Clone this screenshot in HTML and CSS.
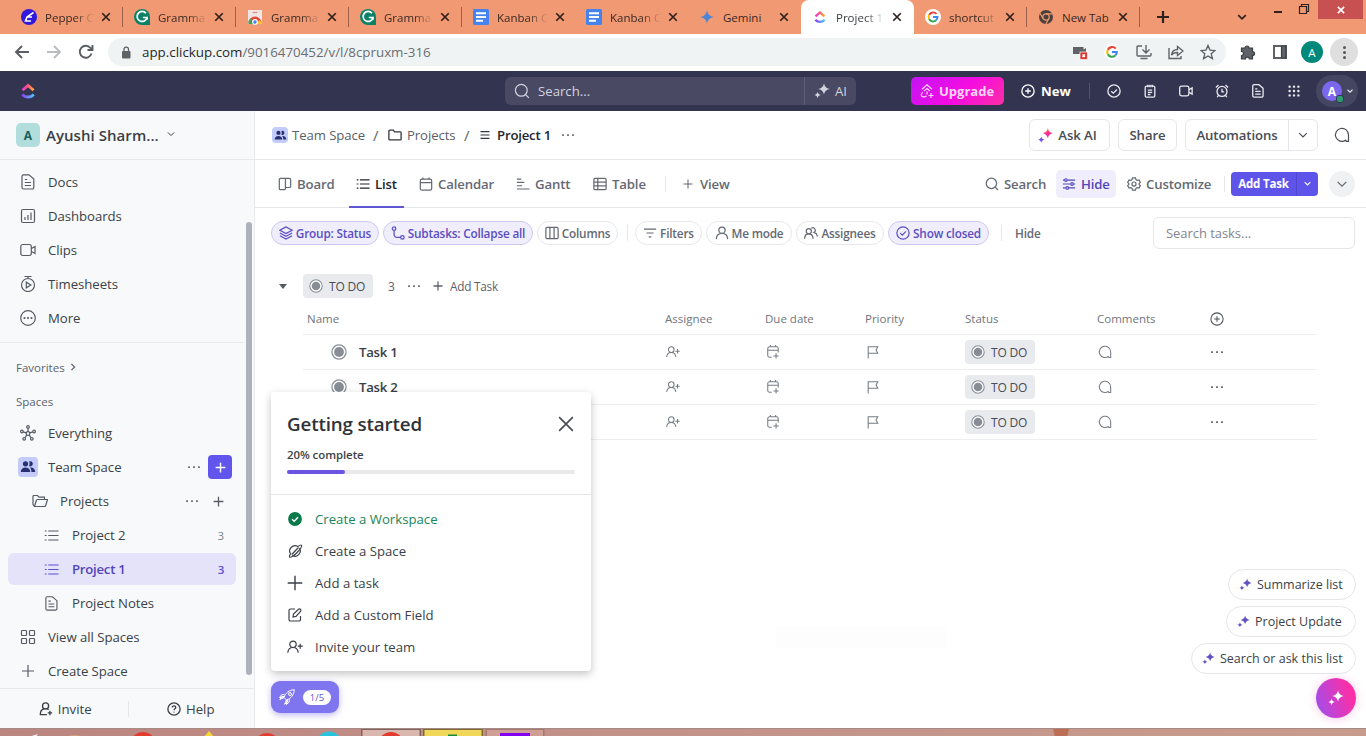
FILE: index.html
```html
<!DOCTYPE html>
<html lang="en">
<head>
  <meta charset="UTF-8">
  <meta name="viewport" content="width=device-width, initial-scale=1.0">
  <title>Project 1</title>
  <link rel="stylesheet" href="styles.css">
</head>
<body>
  <!-- icon sprite -->
  <svg class="sprite" width="0" height="0">
    <defs>
      <linearGradient id="cuTop" x1="0" x2="1" y1="0" y2="0"><stop offset="0" stop-color="#e83ad0"/><stop offset=".5" stop-color="#fb5779"/><stop offset="1" stop-color="#ffb02e"/></linearGradient>
      <linearGradient id="cuBottom" x1="0" x2="1" y1="0" y2="0"><stop offset="0" stop-color="#8a3ffc"/><stop offset="1" stop-color="#4cc9fa"/></linearGradient>
      <linearGradient id="aiBig" x1="0" x2="0" y1="0" y2="1"><stop offset="0" stop-color="#ff8a3c"/><stop offset=".5" stop-color="#fb2d8c"/><stop offset="1" stop-color="#e02ad0"/></linearGradient>
    </defs>
    <symbol id="x" viewBox="0 0 16 16"><path d="M3 3l10 10M13 3L3 13"/></symbol>
    <symbol id="plus" viewBox="0 0 16 16"><path d="M8 2v12M2 8h12"/></symbol>
    <symbol id="down" viewBox="0 0 16 16"><path d="M3 5.500l5 5 5-5"/></symbol>
    <symbol id="right" viewBox="0 0 16 16"><path d="M5.500 3l5 5-5 5"/></symbol>
    <symbol id="dots" viewBox="0 0 16 16"><g fill="currentColor" stroke="none"><rect x="1.200" y="7" width="2.200" height="2.200" rx=".8"/><rect x="6.900" y="7" width="2.200" height="2.200" rx=".8"/><rect x="12.600" y="7" width="2.200" height="2.200" rx=".8"/></g></symbol>
    <symbol id="search" viewBox="0 0 16 16"><circle cx="7.300" cy="7.300" r="5.900"/><path d="M11.600 11.600l3.200 3.200"/></symbol>
    <symbol id="sparkle" viewBox="0 0 16 16"><path fill="currentColor" stroke="none" d="M10 .5c.8 3.200 1.800 4.400 5.500 5.500-3.700 1.100-4.700 2.300-5.500 5.500C9.200 8.300 8.200 7.100 4.500 6 8.200 4.900 9.200 3.700 10 .5zM3.600 8.800c.5 1.900 1.100 2.600 3.200 3.200-2.100.6-2.700 1.300-3.200 3.200-.5-1.900-1.100-2.600-3.200-3.200 2.100-.6 2.700-1.300 3.200-3.200z"/></symbol>
    <symbol id="doc" viewBox="0 0 16 16"><path d="M3.500.8h5.500L13.800 5v8.500a1.500 1.500 0 0 1-1.500 1.500H3.500A1.500 1.500 0 0 1 2 13.500V2.300A1.500 1.500 0 0 1 3.500.8zM4.800 5.500h2.500M4.800 8.500h6.200M4.800 11.500h6.200"/></symbol>
    <symbol id="dash" viewBox="0 0 16 16"><rect x="1.500" y="1.500" width="13" height="13" rx="1.500"/><path d="M5 9v3M8 7v5M11 4.500V12"/></symbol>
    <symbol id="video" viewBox="0 0 16 16"><rect x=".8" y="2.500" width="10.500" height="11" rx="2"/><path d="M11.500 6.500l3.500-2v7l-3.500-2"/></symbol>
    <symbol id="timer" viewBox="0 0 16 16"><circle cx="8" cy="9" r="6.500"/><path d="M4.500 .4h7M8 .4v2M6.300 6.200v5.600l4.500-2.800z"/></symbol>
    <symbol id="more" viewBox="0 0 16 16"><circle cx="8" cy="8" r="7.300"/><g fill="currentColor" stroke="none"><circle cx="4.500" cy="8" r="1.100"/><circle cx="8" cy="8" r="1.100"/><circle cx="11.500" cy="8" r="1.100"/></g></symbol>
    <symbol id="hub" viewBox="0 0 16 16"><circle cx="8" cy="8.500" r="1.800"/><circle cx="8" cy="2" r="1.300"/><circle cx="1.900" cy="6.500" r="1.300"/><circle cx="14.100" cy="6.500" r="1.300"/><circle cx="4.200" cy="13.800" r="1.300"/><circle cx="11.800" cy="13.800" r="1.300"/><path d="M8 3.300v3.400M3.200 6.900l3 1M12.800 6.900l-3 1M5 12.600l1.900-2.700M11 12.600L9.100 9.900"/></symbol>
    <symbol id="team" viewBox="0 0 16 16"><g fill="currentColor" stroke="none"><circle cx="5.500" cy="4.800" r="2.600"/><path d="M.8 13c0-3 2-4.500 4.700-4.500s4.700 1.500 4.700 4.500z"/><path d="M9 2.500a2.600 2.600 0 1 1 0 4.600c.8-1.400.8-3.200 0-4.600zM10 8.500c3.300-.3 5.200 1.500 5.200 4.500h-3.800c0-2-.5-3.400-1.400-4.500z"/></g></symbol>
    <symbol id="folderOpen" viewBox="0 0 16 16"><path d="M2.500 13.500L1 11.500v-8A1 1 0 0 1 2 2.500h3.500L7 4.200h5.500v2.300M2.500 13.500l1.800-6a1.200 1.200 0 0 1 1.200-1h10l-1.800 6a1.300 1.300 0 0 1-1.200 1z"/></symbol>
    <symbol id="folder" viewBox="0 0 16 16"><path d="M1 12.500v-9A1 1 0 0 1 2 2.500h4l1.500 2H14a1 1 0 0 1 1 1v7a1 1 0 0 1-1 1H2a1 1 0 0 1-1-1z"/></symbol>
    <symbol id="list" viewBox="0 0 16 16"><path d="M4.500 3.200H15.500M4.500 8H15.500M4.500 12.800H15.500M.8 3.200h2M.8 8h2M.8 12.800h2"/></symbol>
    <symbol id="bars" viewBox="0 0 16 16"><path d="M2 3.500h12M2 8h12M2 12.500h12"/></symbol>
    <symbol id="grid4" viewBox="0 0 16 16"><rect x="1.500" y="1.500" width="5" height="5" rx=".8"/><rect x="9.500" y="1.500" width="5" height="5" rx=".8"/><rect x="1.500" y="9.500" width="5" height="5" rx=".8"/><rect x="9.500" y="9.500" width="5" height="5" rx=".8"/></symbol>
    <symbol id="personPlus" viewBox="0 0 16 16"><circle cx="6" cy="5.300" r="3.200"/><path d="M.8 13.800c.2-3.500 2-5.300 5.200-5.300s5 1.800 5.200 5.300M13.200 4.700v5M10.700 7.200h5"/></symbol>
    <symbol id="invite" viewBox="0 0 16 16"><circle cx="7.500" cy="4.500" r="3.500"/><path d="M9 14.500H1.500c0-3.500 1.500-6 4-6.500M9.500 8l1.500.8M12.500 10v5M10 12.500h5"/></symbol>
    <symbol id="help" viewBox="0 0 16 16"><circle cx="8" cy="8" r="7"/><path d="M6 6.300c0-2.600 4-2.400 4 0 0 1.500-2 1.400-2 3M8 11v1"/></symbol>
    <symbol id="board" viewBox="0 0 16 16"><path d="M3 1.500h10A1.500 1.500 0 0 1 14.500 3v7.500A1.500 1.500 0 0 1 13 12H8.500M3 1.500A1.500 1.500 0 0 0 1.500 3v10A1.500 1.500 0 0 0 3 14.500h4A1.500 1.500 0 0 0 8.500 13V1.500"/></symbol>
    <symbol id="cal" viewBox="0 0 16 16"><rect x="1.500" y="2.500" width="13" height="12.500" rx="2"/><path d="M1.500 6.500h13M4.500.5v2M11.500.5v2"/></symbol>
    <symbol id="calPlus" viewBox="0 0 16 16"><path d="M6.500 14H4A2 2 0 0 1 2 12V4a2 2 0 0 1 2-2h8a2 2 0 0 1 2 2v4.500M2 6h12M5 0v2M11 0v2M11.500 9.500V15.500M8.500 12.500h6"/></symbol>
    <symbol id="gantt" viewBox="0 0 16 16"><path d="M1 2.500h5M1 6.200h8.500M1 10h6M1 13.700h14.500"/></symbol>
    <symbol id="table" viewBox="0 0 16 16"><rect x="1" y="1.500" width="14" height="13" rx="1.500"/><path d="M1 5.800h14M1 10.200h14M5.500 1.500v13"/></symbol>
    <symbol id="layers" viewBox="0 0 16 16"><path d="M8 1L1 4.800l7 3.800 7-3.800zM1 8l7 3.800L15 8M1 11.200L8 15l7-3.800"/></symbol>
    <symbol id="subtask" viewBox="0 0 16 16"><circle cx="3.500" cy="3" r="2"/><circle cx="13" cy="13" r="2"/><path d="M3.500 5v4a4 4 0 0 0 4 4H11"/></symbol>
    <symbol id="columns" viewBox="0 0 16 16"><rect x="1" y="1.500" width="14" height="13" rx="1.500"/><path d="M5.600 1.500v13M10.400 1.500v13"/></symbol>
    <symbol id="filter" viewBox="0 0 16 16"><path d="M1 3.500h14M4 8h8M6.500 12.500h3"/></symbol>
    <symbol id="person" viewBox="0 0 16 16"><circle cx="8" cy="4.800" r="3.600"/><path d="M1.500 15c.2-4 2.500-6.500 6.500-6.500s6.300 2.500 6.500 6.500"/></symbol>
    <symbol id="people" viewBox="0 0 16 16"><circle cx="5.500" cy="6" r="2.900"/><path d="M.6 14.500c.2-3.500 2-5.500 4.900-5.500s4.700 2 4.900 5.500M8.500 2.500a2.800 2.800 0 1 1 3 4.800c2.200.6 3.600 2.200 3.900 4.700"/></symbol>
    <symbol id="check" viewBox="0 0 16 16"><circle cx="8" cy="8" r="7"/><path d="M4.800 8.200l2.400 2.300 4.200-4.300"/></symbol>
    <symbol id="sliders" viewBox="0 0 16 16"><path d="M1 3.500h1.500M6.500 3.500H15M1 8h8.500M13.500 8H15M1 12.500h3M8 12.500h7"/><circle cx="4.500" cy="3.500" r="1.500"/><circle cx="11.500" cy="8" r="1.500"/><circle cx="6" cy="12.500" r="1.500"/></symbol>
    <symbol id="gear" viewBox="0 0 16 16"><path d="M6.300 1h3.400l.5 2 1.500.9 2-.6 1.600 2.800L13.900 7.500v1l1.400 1.400-1.600 2.800-2-.6-1.500.9-.5 2H6.300l-.5-2-1.500-.9-2 .6L.7 9.900l1.400-1.400v-1L.7 6.100l1.600-2.800 2 .6L5.800 3z"/><circle cx="8" cy="8" r="2.300"/></symbol>
    <symbol id="bubble" viewBox="0 0 16 16"><path d="M14.500 8v6.300H12.300L11.700 13.200A6.500 6.500 0 1 1 14.500 8z"/></symbol>
    <symbol id="flag" viewBox="0 0 16 16"><path d="M2.500 15.500V2h11l-2 3.700 2 3.800h-11"/></symbol>
    <symbol id="circlePlus" viewBox="0 0 16 16"><circle cx="8" cy="8" r="7"/><path d="M8 4.800v6.400M4.800 8h6.400"/></symbol>
    <symbol id="todo" viewBox="0 0 16 16"><circle cx="8" cy="8" r="7.100" fill="#fff"/><circle cx="8" cy="8" r="4.900" fill="currentColor" stroke="none"/></symbol>
    <symbol id="clickup" viewBox="0 0 16 16"><path d="M2.500 7.200L8 2.400l5.500 4.800" fill="none" stroke="url(#cuTop)" stroke-width="2.800"/><path d="M2.300 11.300c3 3.600 8.400 3.600 11.400 0" fill="none" stroke="url(#cuBottom)" stroke-width="2.800"/></symbol>
    <symbol id="grammarly" viewBox="0 0 16 16"><path d="M8 0a8 8 0 0 1 8 8v8H8A8 8 0 1 1 8 0z" fill="#0b8268"/><path d="M12 4.300A5 5 0 1 0 13 8.500H8.800M13 8.500v2.300" fill="none" stroke="#fff" stroke-width="1.700"/></symbol>
    <symbol id="gdoc" viewBox="0 0 16 16"><rect width="16" height="16" rx="1.500" fill="#4584ee"/><path d="M3 4.200h10M3 8h10M3 11.800h7" stroke="#fff" stroke-width="1.900"/></symbol>
    <symbol id="google" viewBox="0 0 16 16"><g fill="none" stroke-width="2.400"><path d="M12.300 4.200A5.500 5.500 0 0 0 3.200 5.500" stroke="#ea4335"/><path d="M3.200 5.500a5.500 5.500 0 0 0 0 5" stroke="#fbbc05"/><path d="M3.200 10.500a5.500 5.500 0 0 0 8.500 1.600" stroke="#34a853"/><path d="M11.700 12.100A5.500 5.500 0 0 0 13.500 8H8" stroke="#4285f4"/></g></symbol>
  </svg>

  <div class="tabstrip">
    <div class="tab"><svg class="fav" viewBox="0 0 16 16"><circle cx="8" cy="8" r="8" fill="#3019dd"/><path d="M12.500 3.500L6 8l-1.500 4H10M6 8h5" fill="none" stroke="#fff" stroke-width="1.600"/></svg><span class="tab-title">Pepper C</span><svg class="tab-x"><use href="#x"/></svg></div>
    <div class="tab"><svg class="fav"><use href="#grammarly"/></svg><span class="tab-title">Gramma</span><svg class="tab-x"><use href="#x"/></svg></div>
    <div class="tab"><svg class="fav" viewBox="0 0 16 16"><path d="M1 1h14v14H1z" fill="#efe7e5"/><path d="M1.500 14a6.500 6.500 0 0 1 13 0z" fill="#e2483a"/><path d="M1.500 14a6.500 6.500 0 0 1 2-4.500L7 15H1.500z" fill="#3ea455"/><path d="M14.500 14a6.500 6.500 0 0 0-2-3L9 15h5.500z" fill="#fbc52d"/><circle cx="8" cy="13" r="2.300" fill="#4a80e8" stroke="#fff"/><path d="M5.500 3.500h5" stroke="#e88a7c"/></svg><span class="tab-title">Gramma</span><svg class="tab-x"><use href="#x"/></svg></div>
    <div class="tab"><svg class="fav"><use href="#grammarly"/></svg><span class="tab-title">Gramma</span><svg class="tab-x"><use href="#x"/></svg></div>
    <div class="tab"><svg class="fav"><use href="#gdoc"/></svg><span class="tab-title">Kanban C</span><svg class="tab-x"><use href="#x"/></svg></div>
    <div class="tab"><svg class="fav"><use href="#gdoc"/></svg><span class="tab-title">Kanban C</span><svg class="tab-x"><use href="#x"/></svg></div>
    <div class="tab last"><svg class="fav" viewBox="0 0 16 16"><path d="M8 1.500c1 4 2.500 5.500 6.500 6.500-4 1-5.500 2.500-6.500 6.500C7 10.500 5.500 9 1.500 8 5.500 7 7 5.500 8 1.500z" fill="#4a86d8"/></svg><span class="tab-title full">Gemini</span><svg class="tab-x"><use href="#x"/></svg></div>
    <div class="tab active"><svg class="fav" viewBox="0 0 16 16"><use href="#clickup" x="1.500" y="1.500" width="13" height="13"/></svg><span class="tab-title">Project 1</span><svg class="tab-x"><use href="#x"/></svg></div>
    <div class="tab"><svg class="fav" viewBox="0 0 16 16"><circle cx="8" cy="8" r="8" fill="#fff"/><use href="#google" x="1.500" y="1.500" width="13" height="13"/></svg><span class="tab-title">shortcut</span><svg class="tab-x"><use href="#x"/></svg></div>
    <div class="tab"><svg class="fav" viewBox="0 0 16 16"><circle cx="8" cy="8" r="7" fill="#4a403c"/><circle cx="8" cy="8" r="3.200" fill="#4a403c" stroke="#f09972" stroke-width="1.200"/><path d="M8 4.800h6.500M5.200 9.600L2 4.300M10.800 9.600l-3 5.400" stroke="#f09972"/></svg><span class="tab-title full">New Tab</span><svg class="tab-x"><use href="#x"/></svg></div>
    <svg class="new-tab"><use href="#plus"/></svg>
    <div class="window-buttons">
      <svg class="tab-search"><use href="#down"/></svg>
      <svg class="win-icon" viewBox="0 0 12 12"><path d="M2 9h8" stroke-width="2"/></svg>
      <svg class="win-icon" viewBox="0 0 12 12"><path d="M1.500 3.500h7v7h-7zM3.500 3.500v-2h7v7h-2"/></svg>
      <div class="win-close"><svg><use href="#x"/></svg></div>
    </div>
  </div>

  <div class="toolbar">
    <svg class="nav-icon" viewBox="0 0 16 16"><path d="M15 8H2M8 2L2 8l6 6"/></svg>
    <svg class="nav-icon dim" viewBox="0 0 16 16"><path d="M1 8h13M8 2l6 6-6 6"/></svg>
    <svg class="nav-icon" viewBox="0 0 16 16"><path d="M13.500 9.500A6 6 0 1 1 12.500 4L14 5.500M14.500 1v5h-5"/></svg>
    <div class="omnibox">
      <svg class="lock" viewBox="0 0 10 13"><rect x="1" y="5" width="8.500" height="7.500" rx="1" fill="#5f6368"/><path d="M3 5V3.300a2.200 2.200 0 0 1 4.500 0V5" fill="none" stroke="#5f6368" stroke-width="1.300"/></svg>
      <span class="url"><b>app.clickup.com</b>/9016470452/v/l/8cpruxm-316</span>
      <div class="omni-icons">
        <svg viewBox="0 0 16 16"><path d="M1 3h10.500v2.500L14 4v6H1z" fill="#5f6368" stroke="none"/><rect x="8" y="8" width="7.500" height="7.500" fill="#d93a30" stroke="#fff" stroke-width=".7"/><path d="M10.500 10.500l2.500 2.500M13 10.500L10.500 13" stroke="#fff"/></svg>
        <svg viewBox="0 0 16 16"><circle cx="8" cy="8" r="8" fill="#fff" stroke="none"/><use href="#google" x="1" y="1" width="14" height="14"/></svg>
        <svg viewBox="0 0 16 16"><path d="M6 2H2a1 1 0 0 0-1 1v8a1 1 0 0 0 1 1h12a1 1 0 0 0 1-1V9M4.500 14.500h7M10 1v8M6.500 5.500L10 9l3.500-3.500"/></svg>
        <svg viewBox="0 0 16 16"><path d="M1 4v10.500h12V12M3.500 11c.5-3.500 2.500-5.500 6-5.500V2.500L15 7l-5.500 4.500v-3c-2.500 0-4.500.5-6 2.500z"/></svg>
        <svg viewBox="0 0 16 16"><path d="M8 1.500l2 4.600 5 .4-3.800 3.300 1.200 4.900L8 12l-4.400 2.700 1.200-4.900L1 6.500l5-.4z"/></svg>
      </div>
    </div>
    <svg class="ext-icon" viewBox="0 0 16 16"><path d="M1.500 4H5a2 2 0 1 1 4 0h3.500v3.500a2 2 0 1 1 0 4V15H9.300a1.900 1.900 0 0 0-3.800 0h-4v-3.500a2 2 0 0 0 0-4z" fill="#5f6368"/></svg>
    <svg class="ext-icon" viewBox="0 0 16 16"><path d="M2 2h12v12H2z" fill="none" stroke="#5f6368" stroke-width="2"/><path d="M9.500 2H14v12H9.500z" fill="#5f6368"/></svg>
    <div class="chrome-avatar">A</div>
    <div class="menu-btn"><i></i><i></i><i></i></div>
  </div>

  <header class="app-header">
    <svg class="logo"><use href="#clickup"/></svg>
    <div class="global-search">
      <div class="gs-field"><svg><use href="#search"/></svg><span>Search...</span></div>
      <div class="gs-ai"><svg><use href="#sparkle"/></svg><span>AI</span></div>
    </div>
    <div class="header-right">
      <button class="upgrade"><svg viewBox="0 0 16 16"><path d="M3 6.200L8 1.800l5 4.400M5 8L8 5.500 11 8M4 9.500a2.200 2.200 0 0 0 0 4.300c1.500.3 2.500 0 3.500-.8M8 8.500v3M12 10v5M9.500 12.500h5"/></svg>Upgrade</button>
      <div class="new"><svg><use href="#circlePlus"/></svg>New</div>
      <span class="v-line"></span>
      <div class="quick">
        <svg><use href="#check"/></svg>
        <svg viewBox="0 0 16 16"><rect x="2.500" y="2.500" width="11" height="12.500" rx="1.500"/><path d="M5.500 .8v3M8 .8v3M10.500 .8v3M5.500 7h5M5.500 9.500h5M5.500 12h3"/></svg>
        <svg><use href="#video"/></svg>
        <svg viewBox="0 0 16 16"><circle cx="8" cy="8.500" r="5.700"/><path d="M8 5.500V9h2.500M1 4l3-2.800M15 4l-3-2.800M4 13l-1.500 2M12 13l1.500 2"/></svg>
        <svg><use href="#doc"/></svg>
        <svg viewBox="0 0 16 16"><path d="M3 3h.01M8 3h.01M13 3h.01M3 8h.01M8 8h.01M13 8h.01M3 13h.01M8 13h.01M13 13h.01" stroke-width="2.800" stroke-linecap="round"/></svg>
      </div>
      <div class="me"><span class="me-avatar">A<i></i></span><svg><use href="#down"/></svg></div>
    </div>
  </header>

  <div class="app">
    <aside class="sidebar">
      <div class="workspace"><span class="ws-badge">A</span><span class="ws-name">Ayushi Sharm...</span><svg><use href="#down"/></svg></div>
      <div class="side-scroll">
        <nav class="side-nav">
          <div class="side-item"><svg><use href="#doc"/></svg>Docs</div>
          <div class="side-item"><svg><use href="#dash"/></svg>Dashboards</div>
          <div class="side-item"><svg><use href="#video"/></svg>Clips</div>
          <div class="side-item"><svg><use href="#timer"/></svg>Timesheets</div>
          <div class="side-item"><svg><use href="#more"/></svg>More</div>
        </nav>
        <div class="side-label fav-label">Favorites <svg><use href="#right"/></svg></div>
        <div class="side-label">Spaces</div>
        <nav class="spaces">
          <div class="side-item"><svg><use href="#hub"/></svg>Everything</div>
          <div class="side-item"><span class="team-badge"><svg><use href="#team"/></svg></span>Team Space<svg class="dots push"><use href="#dots"/></svg><span class="add-btn"><svg><use href="#plus"/></svg></span></div>
          <div class="side-item lvl1"><svg><use href="#folderOpen"/></svg>Projects<svg class="dots push"><use href="#dots"/></svg><svg class="small-plus"><use href="#plus"/></svg></div>
          <div class="side-item lvl2"><svg><use href="#list"/></svg>Project 2<span class="count">3</span></div>
          <div class="side-item lvl2 selected"><svg><use href="#list"/></svg>Project 1<span class="count">3</span></div>
          <div class="side-item lvl2"><svg><use href="#doc"/></svg>Project Notes</div>
          <div class="side-item"><svg><use href="#grid4"/></svg>View all Spaces</div>
          <div class="side-item"><svg><use href="#plus"/></svg>Create Space</div>
        </nav>
        <div class="scrollbar"></div>
      </div>
      <div class="side-footer">
        <div><svg><use href="#invite"/></svg>Invite</div>
        <div><svg><use href="#help"/></svg>Help</div>
      </div>
    </aside>

    <main class="main">
      <div class="crumbs">
        <span class="team-badge sm"><svg><use href="#team"/></svg></span><span class="c-team">Team Space</span>
        <span class="slash">/</span>
        <svg class="dark"><use href="#folder"/></svg><span class="c-proj">Projects</span>
        <span class="slash">/</span>
        <svg class="dark bars"><use href="#bars"/></svg><span class="current">Project 1</span>
        <svg class="dots"><use href="#dots"/></svg>
        <div class="crumb-actions">
          <button class="btn ask"><svg viewBox="0 0 16 16"><path fill="url(#aiBig)" stroke="none" d="M10.500 0c.8 3.300 1.900 4.500 5.300 5.500-3.400 1-4.500 2.200-5.300 5.500-.8-3.300-1.900-4.500-5.300-5.500 3.400-1 4.500-2.200 5.300-5.500z"/><path fill="#7050e8" stroke="none" d="M3.500 9c.5 2.100 1.200 2.800 3.300 3.400-2.100.6-2.800 1.300-3.300 3.400-.5-2.100-1.200-2.800-3.300-3.400 2.100-.6 2.800-1.300 3.300-3.400z"/></svg>Ask AI</button>
          <button class="btn share">Share</button>
          <div class="btn split"><span>Automations</span><span class="split-arrow"><svg><use href="#down"/></svg></span></div>
          <svg class="chat"><use href="#bubble"/></svg>
        </div>
      </div>

      <div class="views">
        <div class="view v-board"><svg><use href="#board"/></svg>Board</div>
        <div class="view v-list on"><svg><use href="#list"/></svg>List</div>
        <div class="view v-cal"><svg><use href="#cal"/></svg>Calendar</div>
        <div class="view v-gantt"><svg><use href="#gantt"/></svg>Gantt</div>
        <div class="view v-table"><svg><use href="#table"/></svg>Table</div>
        <span class="v-line"></span>
        <div class="view"><svg class="p12"><use href="#plus"/></svg>View</div>
        <div class="view-actions">
          <div class="va-search"><svg><use href="#search"/></svg>Search</div>
          <div class="va-hide"><svg><use href="#sliders"/></svg>Hide</div>
          <div class="va-custom"><svg><use href="#gear"/></svg>Customize</div>
          <span class="v-line"></span>
          <div class="add-task"><span>Add Task</span><span class="at-arrow"><svg><use href="#down"/></svg></span></div>
          <div class="round"><svg><use href="#down"/></svg></div>
        </div>
      </div>

      <div class="filters">
        <span class="chip on w108"><svg><use href="#layers"/></svg>Group: Status</span>
        <span class="chip on w150"><svg><use href="#subtask"/></svg>Subtasks: Collapse all</span>
        <span class="chip w81"><svg><use href="#columns"/></svg>Columns</span>
        <span class="v-line f1"></span>
        <span class="chip w67"><svg><use href="#filter"/></svg>Filters</span>
        <span class="chip w86"><svg><use href="#person"/></svg>Me mode</span>
        <span class="chip w88"><svg><use href="#people"/></svg>Assignees</span>
        <span class="chip on w101"><svg><use href="#check"/></svg>Show closed</span>
        <span class="v-line f2"></span>
        <span class="hide-link">Hide</span>
        <div class="task-search">Search tasks...</div>
      </div>

      <div class="group">
        <span class="caret"></span>
        <span class="status"><svg><use href="#todo"/></svg>TO DO</span>
        <span class="g-count">3</span>
        <svg class="dots"><use href="#dots"/></svg>
        <svg class="g-plus"><use href="#plus"/></svg>
        <span class="g-add">Add Task</span>
      </div>

      <div class="table">
        <div class="row head"><span>Name</span><span>Assignee</span><span>Due date</span><span>Priority</span><span>Status</span><span>Comments</span><svg><use href="#circlePlus"/></svg></div>
        <div class="row"><span class="name"><svg><use href="#todo"/></svg>Task 1</span><svg><use href="#personPlus"/></svg><svg><use href="#calPlus"/></svg><svg><use href="#flag"/></svg><span class="status"><svg><use href="#todo"/></svg>TO DO</span><svg><use href="#bubble"/></svg><svg class="dots"><use href="#dots"/></svg></div>
        <div class="row"><span class="name"><svg><use href="#todo"/></svg>Task 2</span><svg><use href="#personPlus"/></svg><svg><use href="#calPlus"/></svg><svg><use href="#flag"/></svg><span class="status"><svg><use href="#todo"/></svg>TO DO</span><svg><use href="#bubble"/></svg><svg class="dots"><use href="#dots"/></svg></div>
        <div class="row"><span></span><svg><use href="#personPlus"/></svg><svg><use href="#calPlus"/></svg><svg><use href="#flag"/></svg><span class="status"><svg><use href="#todo"/></svg>TO DO</span><svg><use href="#bubble"/></svg><svg class="dots"><use href="#dots"/></svg></div>
      </div>

      <!-- floating widgets -->
      <section class="started">
        <div class="st-top">
          <div class="st-title"><h2>Getting started</h2><svg><use href="#x"/></svg></div>
          <p>20% complete</p>
          <div class="bar"><div class="bar-fill" style="width: 20%"></div></div>
        </div>
        <ul>
          <li class="done"><svg viewBox="0 0 16 16"><circle cx="8" cy="8" r="6.900" fill="#0b7a4b" stroke="none"/><path d="M5 8.200l2.200 2 3.800-4" stroke="#fff" stroke-width="1.500"/></svg>Create a Workspace</li>
          <li><svg viewBox="0 0 16 16"><path d="M3.600 10.900A5.300 5.300 0 0 1 11 3.600M12.400 5.100A5.300 5.300 0 0 1 5.100 12.400M11 3.600c1.500-1.300 3-1.800 3.500-1.300 1 1-1.300 4-4.400 7.200s-6.500 5.500-7.500 4.500c-.5-.5 0-1.700 1-3.100M4.700 11.500l6.800-7"/></svg>Create a Space</li>
          <li><svg viewBox="0 0 16 16"><path d="M8 .7v14.600M.7 8h14.600" stroke-width="1.400"/></svg>Add a task</li>
          <li><svg viewBox="0 0 16 16"><path d="M8 2H3.500A1.500 1.500 0 0 0 2 3.500v9A1.500 1.500 0 0 0 3.500 14h8.500A1.500 1.500 0 0 0 13.500 12.500V9M6 10l.5-3L11.500 2.200c1.500-1 3 .5 2.200 2L9 9.400z"/></svg>Add a Custom Field</li>
          <li><svg><use href="#personPlus"/></svg>Invite your team</li>
        </ul>
      </section>
      <div class="rocket"><svg viewBox="0 0 16 16"><path d="M5 8.500C6.500 4 10 1 15.300.7 15 6 12 9.500 7.500 11zM5.500 7.500H2.700L.8 10.500 5 8.500M8.500 10.500v2.800l-3 1.900 2-4.200M5.500 5.500L2.500 5.800.5 8.500l4 .3M10.500 10.200l-.5 3-2.500 2.300-.3-4"/><circle cx="11" cy="5" r="1.500"/></svg><span>1/5</span></div>
      <div class="ghost"></div>
      <div class="ai-chips">
        <span class="ai-chip a1"><svg><use href="#sparkle"/></svg>Summarize list</span>
        <span class="ai-chip a2"><svg><use href="#sparkle"/></svg>Project Update</span>
        <span class="ai-chip a3"><svg><use href="#sparkle"/></svg>Search or ask this list</span>
      </div>
      <div class="ai-fab"><svg><use href="#sparkle"/></svg></div>
    </main>
  </div>

  <div class="taskbar">
    <svg viewBox="0 0 1366 8">
      <path d="M361 0h60v8h-60z" fill="#80635e"/><path d="M362.500 1h57v7h-57z" fill="#dbb8af"/>
      <path d="M423 0h60v8h-60z" fill="#7d6b35"/><path d="M424.500 1h57v7h-57z" fill="#f0d75a"/>
      <path d="M485.500 0h59v8h-59z" fill="#a37a73"/><path d="M487 1h56v7h-56z" fill="#cf9f95"/>
      <path d="M28 8l10-3-2 3z" fill="#eee"/><path d="M65 8q10-4 19 0z" fill="#d99b74"/>
      <circle cx="143" cy="16" r="13" fill="#e23c30"/><circle cx="267" cy="17" r="13" fill="#e23c30"/><circle cx="391" cy="16" r="13" fill="#e23c30"/>
      <path d="M209 2l5 6h-10z" fill="#f7d831"/><circle cx="329" cy="15.500" r="13" fill="#28c4dd"/>
      <path d="M448 5.500h9v2.500h-9z" fill="#188a35"/><path d="M500 4h30v4h-30z" fill="#8300f0"/>
      <path d="M1053 0h16l-2 8h-12z" fill="#b9593b" opacity=".65"/>
    </svg>
  </div>
</body>
</html>
```
FILE: styles.css
```css
* {
  box-sizing: border-box;
}

body {
  margin: 0;
  width: 1366px;
  height: 736px;
  overflow: hidden;
  display: flex;
  flex-direction: column;
  font-family: "Open Sans", "Noto Sans", sans-serif;
  font-size: 13.2px;
  color: #3b3f46;
  background: #fff;
}

svg {
  width: 16px;
  height: 16px;
  flex: none;
  display: block;
  fill: none;
  stroke: currentColor;
  stroke-width: 1.2;
}

.sprite {
  position: absolute;
  width: 0;
  height: 0;
}

button {
  font: inherit;
  margin: 0;
}

/* browser tabs */
.tabstrip {
  height: 34px;
  flex: none;
  background: #f09972;
  display: flex;
  align-items: center;
  padding-left: 10px;
  color: #3a2823;
}

.tab {
  width: 113px;
  height: 34px;
  flex: none;
  display: flex;
  align-items: center;
  padding-left: 11px;
  font-size: 11.5px;
}

.tab::after {
  content: "";
  margin-left: 10px;
  width: 1px;
  height: 20px;
  background: #9b614a;
}

.tab.last::after,
.tab.active::after {
  visibility: hidden;
}

.tab.active {
  background: #fff;
  border-radius: 8px 8px 0 0;
  color: #3c4043;
}

.fav {
  stroke: none;
}

.tab-title {
  width: 51px;
  margin-left: 8px;
  white-space: nowrap;
  -webkit-mask-image: linear-gradient(90deg, #000 60%, transparent);
  mask-image: linear-gradient(90deg, #000 60%, transparent);
}

.tab-title.full {
  -webkit-mask-image: none;
  mask-image: none;
}

.tab-x {
  width: 12px;
  height: 12px;
  margin-left: 6px;
  stroke-width: 2.3;
  color: #30211c;
}

.new-tab {
  margin-left: 15px;
  stroke-width: 2.2;
  color: #30211c;
}

.window-buttons {
  margin-left: auto;
  height: 34px;
  display: flex;
  align-items: flex-start;
  color: #30211c;
}

.tab-search {
  width: 12px;
  height: 12px;
  margin: 11px 24px 0 0;
  stroke-width: 2.3;
}

.win-icon {
  width: 12px;
  height: 12px;
  margin: 3px 14px 0 0;
}

.win-close {
  width: 45px;
  height: 19px;
  margin-right: 3px;
  margin-left: -6px;
  background: #c75050;
  color: #fff;
  display: flex;
  align-items: center;
  justify-content: center;
}

.win-close svg {
  width: 10px;
  height: 10px;
  stroke-width: 2.6;
}

/* browser toolbar */
.toolbar {
  height: 37px;
  flex: none;
  display: flex;
  align-items: center;
  padding: 0 8px 1px 14px;
}

.nav-icon {
  margin-right: 16px;
  stroke-width: 1.9;
  color: #5a5d61;
}

.nav-icon.dim {
  color: #b9bbbe;
}

.omnibox {
  width: 1118px;
  height: 28px;
  margin-left: -2px;
  border-radius: 14px;
  background: #f0f3f4;
  display: flex;
  align-items: center;
  padding: 0 10px 0 13px;
}

.lock {
  width: 10px;
  height: 13px;
  margin-right: 11px;
  stroke: none;
}

.url {
  font-size: 13.35px;
  color: #6a6e73;
}

.url b {
  font-weight: 400;
  color: #26282b;
}

.omni-icons {
  margin-left: auto;
  display: flex;
  gap: 16px;
  color: #5f6368;
}

.omni-icons svg {
  stroke-width: 1.4;
}

.ext-icon {
  margin-left: 14px;
  margin-right: 2px;
}

.ext-icon + .ext-icon {
  margin-right: 0;
}

.chrome-avatar {
  width: 22px;
  height: 22px;
  margin-left: 13px;
  border-radius: 50%;
  background: #00897b;
  color: #fff;
  font-size: 11.5px;
  display: flex;
  align-items: center;
  justify-content: center;
}

.menu-btn {
  width: 28px;
  height: 28px;
  margin-left: 7px;
  border-radius: 50%;
  background: #dfdfdf;
  display: flex;
  flex-direction: column;
  align-items: center;
  justify-content: center;
  gap: 2px;
  flex: none;
}

.menu-btn i {
  width: 3px;
  height: 3px;
  border-radius: 50%;
  background: #55585c;
}

/* app header */
.app-header {
  height: 40px;
  flex: none;
  background: #33344f;
  color: #e9e9f1;
  display: flex;
  align-items: center;
  padding-left: 20px;
}

.logo {
  stroke: none;
}

.global-search {
  width: 351px;
  height: 28px;
  margin-left: 469px;
  border-radius: 6px;
  background: #494964;
  display: flex;
  color: #d3d4df;
}

.gs-field {
  width: 300px;
  display: flex;
  align-items: center;
  gap: 8px;
  padding-left: 9px;
  border-right: 1px solid #5c5d78;
}

.gs-ai {
  display: flex;
  align-items: center;
  gap: 5px;
  padding-left: 9px;
}

.header-right {
  margin-left: auto;
  display: flex;
  align-items: center;
}

.upgrade {
  width: 93px;
  height: 28px;
  border: 0;
  border-radius: 5px;
  background: linear-gradient(135deg, #c314f5, #f50ce0 55%, #fb2fa5);
  color: #ffd5fa;
  font-weight: 700;
  font-size: 13px;
  display: flex;
  align-items: center;
  gap: 4px;
  padding: 0 8px;
}

.new {
  display: flex;
  align-items: center;
  gap: 6px;
  margin-left: 17px;
  width: 52px;
  font-weight: 700;
  color: #fff;
}

.new svg {
  width: 14px;
  height: 14px;
  stroke-width: 1.5;
}

.v-line {
  width: 1px;
  height: 16px;
  background: #e4e6ea;
}

.header-right .v-line {
  margin-left: 16px;
  background: #51526c;
}

.quick {
  display: flex;
  gap: 22px;
  margin-left: 17px;
}

.quick svg {
  width: 14px;
  height: 14px;
  stroke-width: 1.5;
}

.me {
  width: 42px;
  height: 32px;
  margin: 0 8px 0 15px;
  border-radius: 16px;
  background: #454662;
  display: flex;
  align-items: center;
  padding-left: 6px;
  gap: 4px;
}

.me svg {
  width: 8px;
  height: 8px;
  stroke-width: 2.2;
}

.me-avatar {
  width: 20px;
  height: 20px;
  border-radius: 50%;
  background: #7b68ee;
  color: #fff;
  font-size: 12px;
  font-weight: 700;
  display: flex;
  align-items: center;
  justify-content: center;
  position: relative;
}

.me-avatar i {
  position: absolute;
  right: -2px;
  bottom: -2px;
  width: 8px;
  height: 8px;
  border-radius: 3px;
  border: 1px solid #2c3a4c;
  background: #2f9a72;
}

/* sidebar */
.app {
  height: 617px;
  flex: none;
  display: flex;
}

.sidebar {
  width: 255px;
  flex: none;
  background: #f7f9fb;
  border-right: 1px solid #e9ebee;
  display: flex;
  flex-direction: column;
}

.workspace {
  height: 49px;
  flex: none;
  border-bottom: 1px solid #e6e8eb;
  display: flex;
  align-items: center;
  padding-left: 16px;
}

.ws-badge {
  width: 24px;
  height: 24px;
  border-radius: 5px;
  background: #b1dedd;
  color: #17605c;
  font-size: 12px;
  font-weight: 700;
  display: flex;
  align-items: center;
  justify-content: center;
}

.ws-name {
  margin-left: 6px;
  width: 115px;
  font-size: 15px;
  font-weight: 600;
  letter-spacing: 0.05px;
  white-space: nowrap;
}

.workspace svg {
  width: 10px;
  height: 10px;
  margin-left: 5px;
  margin-top: -2px;
  stroke-width: 1.6;
}

.side-scroll {
  height: 528px;
  position: relative;
}

.side-nav {
  width: 244px;
  padding: 5px 0 7px;
  border-bottom: 1px solid #e8eaee;
}

.side-item {
  height: 34px;
  display: flex;
  align-items: center;
  padding: 0 15px 0 20px;
  gap: 12px;
  color: #3b3f46;
  letter-spacing: -0.05px;
}

.side-item > svg {
  color: #565b64;
}

.side-label {
  height: 34px;
  display: flex;
  align-items: center;
  padding-left: 16px;
  gap: 3px;
  font-size: 11.5px;
  color: #5d626b;
}

.side-label svg {
  width: 10px;
  height: 10px;
  stroke-width: 2;
}

.fav-label {
  margin-top: 7px;
}

.spaces {
  width: 247px;
  margin-top: -2px;
}

.team-badge {
  width: 20px;
  height: 20px;
  flex: none;
  margin: 0 -2px;
  border-radius: 4px;
  background: #c3cbfb;
  color: #28306f;
  display: flex;
  align-items: center;
  justify-content: center;
}

.team-badge.sm {
  width: 16px;
  height: 16px;
  margin: 0;
}

.team-badge.sm svg {
  width: 13px;
  height: 13px;
}

.dots {
  width: 14px;
  height: 14px;
  color: #555a63;
}

.side-item .push {
  margin-left: auto;
  margin-right: -5px;
}

.add-btn {
  width: 24px;
  height: 24px;
  border-radius: 4px;
  background: #6155ec;
  color: #fff;
  display: flex;
  align-items: center;
  justify-content: center;
}

.add-btn svg {
  width: 13px;
  height: 13px;
  stroke-width: 1.8;
}

.lvl1 {
  padding-left: 32px;
}

.lvl1 .small-plus {
  width: 13px;
  height: 13px;
  margin: 0 7px 0 5px;
  stroke-width: 1.6;
}

.lvl1 .push {
  margin-right: -4px;
}

.lvl2 {
  padding-left: 44px;
}

.lvl2 > svg {
  width: 15px;
  height: 15px;
  margin-right: 1px;
}

.count {
  margin-left: auto;
  margin-right: 8px;
  font-size: 11.5px;
  color: #7c828b;
}

.side-item.selected {
  height: 32px;
  margin: 1px 11px 1px 8px;
  padding: 0 4px 0 36px;
  border-radius: 6px;
  background: #e5e3fa;
  color: #5346b8;
  font-weight: 600;
  letter-spacing: -0.25px;
}

.selected > svg,
.selected .count {
  color: #5b4fd0;
}

.scrollbar {
  position: absolute;
  left: 246px;
  top: 62px;
  width: 6px;
  height: 453px;
  border-radius: 3px;
  background: #aeb2bc;
}

.side-footer {
  height: 40px;
  border-top: 1px solid #e6e8eb;
  display: flex;
  align-items: center;
}

.side-footer div {
  flex: 1;
  height: 16px;
  display: flex;
  align-items: center;
  justify-content: center;
  gap: 5px;
}

.side-footer div:first-child {
  padding-left: 3px;
}

.side-footer div:last-child {
  border-left: 1px solid #e4e6ea;
  padding-right: 1px;
}

.side-footer svg {
  width: 14px;
  height: 14px;
  stroke-width: 1.5;
}

/* main area */
.main {
  width: 1111px;
  position: relative;
}

.crumbs {
  height: 49px;
  border-bottom: 1px solid #e6e8eb;
  display: flex;
  align-items: center;
  padding: 0 16px 0 17px;
  color: #5a5f68;
}

.c-team {
  width: 73px;
  margin-left: 4px;
  letter-spacing: -0.1px;
  white-space: nowrap;
}

.slash {
  width: 6px;
  margin: 0 9px 0 8px;
  font-size: 15px;
}

.crumbs .dark {
  width: 14px;
  height: 14px;
  margin-right: 5px;
  color: #33363c;
  stroke-width: 1.5;
}

.crumbs .bars {
  width: 12px;
  margin-left: 0;
  margin-right: 6px;
}

.c-proj {
  width: 49px;
  letter-spacing: -0.1px;
}

.current {
  width: 54px;
  margin-right: 10px;
  font-weight: 600;
  letter-spacing: -0.2px;
  color: #23262c;
  white-space: nowrap;
}

.crumb-actions {
  margin-left: auto;
  display: flex;
  align-items: center;
  gap: 8px;
}

.btn {
  height: 32px;
  border: 1px solid #e4e6ea;
  border-radius: 6px;
  background: #fff;
  color: #484c54;
  font-size: 13.2px;
  font-weight: 600;
  letter-spacing: -0.1px;
  display: flex;
  align-items: center;
  justify-content: center;
  gap: 5px;
  padding: 0;
  white-space: nowrap;
}

.ask {
  width: 81px;
  padding-right: 4px;
}

.ask svg {
  width: 15px;
  height: 15px;
}

.share {
  width: 59px;
}

.split {
  width: 133px;
  gap: 0;
}

.split > span:first-child {
  width: 102px;
  text-align: center;
}

.split-arrow {
  flex: 1;
  height: 30px;
  border-left: 1px solid #e4e6ea;
  display: flex;
  align-items: center;
  justify-content: center;
}

.split-arrow svg,
.round svg {
  width: 12px;
  height: 12px;
  stroke-width: 1.6;
}

.chat {
  margin-left: 8px;
  color: #484c54;
}

.views {
  height: 48px;
  border-bottom: 1px solid #e6e8eb;
  display: flex;
  align-items: center;
  padding: 0 11px 0 23px;
  color: #646973;
  font-weight: 600;
  letter-spacing: -0.15px;
}

.view {
  height: 48px;
  display: flex;
  align-items: center;
  gap: 5px;
  white-space: nowrap;
}

.view svg,
.view-actions svg {
  width: 14px;
  height: 14px;
  stroke-width: 1.4;
}

.view .p12 {
  width: 12px;
  height: 12px;
  margin-right: 1px;
}

.v-board {
  width: 71px;
}

.v-list {
  width: 55px;
  padding-left: 7px;
  border-bottom: 2px solid #6155d2;
  padding-top: 2px;
  margin-right: 15px;
}

.view.on {
  color: #23262c;
}

.v-cal {
  width: 97px;
}

.v-gantt {
  width: 77px;
}

.v-table {
  width: 72px;
}

.views > .v-line {
  margin-right: 16px;
}

.view-actions {
  margin-left: auto;
  display: flex;
  align-items: center;
  white-space: nowrap;
}

.view-actions > div {
  display: flex;
  align-items: center;
  gap: 5px;
}

.va-search {
  width: 71px;
}

.va-hide {
  width: 60px;
  height: 28px;
  padding-left: 6px;
  border-radius: 5px;
  background: #f0eefd;
  color: #5346b8;
}

.va-custom {
  margin-left: 11px;
  width: 97px;
}

.view-actions .add-task {
  width: 87px;
  height: 24px;
  margin: 0 11px 0 6px;
  border-radius: 4px;
  background: #5f54ea;
  color: #fff;
  font-size: 11.5px;
  font-weight: 700;
  gap: 0;
}

.add-task > span:first-child {
  width: 65px;
  text-align: center;
}

.at-arrow {
  flex: 1;
  height: 24px;
  border-left: 1px solid #5146cf;
  display: flex;
  align-items: center;
  justify-content: center;
}

.view-actions .at-arrow svg {
  width: 9px;
  height: 9px;
  stroke-width: 2;
}

.view-actions .round {
  width: 26px;
  height: 26px;
  border-radius: 50%;
  background: #eff1f2;
  justify-content: center;
}

/* filter chips */
.filters {
  height: 49px;
  display: flex;
  align-items: center;
  padding: 0 11px 0 16px;
  font-size: 11.8px;
  font-weight: 600;
  letter-spacing: -0.2px;
  color: #646973;
}

.chip {
  height: 24px;
  border: 1px solid #e6e8eb;
  border-radius: 12px;
  display: flex;
  align-items: center;
  justify-content: center;
  gap: 3px;
  margin-right: 4px;
  white-space: nowrap;
}

.chip svg {
  width: 14px;
  height: 14px;
  stroke-width: 1.4;
}

.chip.on {
  border-color: #cdc8f0;
  background: #f0eefd;
  color: #5a4ec0;
}

.w108 { width: 108px; }
.w150 { width: 150px; }
.w81 { width: 81px; }
.w67 { width: 67px; }
.w86 { width: 86px; }
.w88 { width: 88px; }
.w101 { width: 101px; }

.f1 {
  margin: 0 7px 0 5px;
}

.f2 {
  margin: 0 13px 0 8px;
}

.task-search {
  width: 202px;
  height: 32px;
  margin-left: auto;
  border: 1px solid #e4e6ea;
  border-radius: 6px;
  display: flex;
  align-items: center;
  padding-left: 12px;
  font-size: 13px;
  font-weight: 400;
  letter-spacing: -0.05px;
  color: #81868f;
}

/* task list */
.group {
  height: 24px;
  margin-top: 17px;
  padding-left: 24px;
  display: flex;
  align-items: center;
  font-size: 12px;
  color: #5d626b;
}

.caret {
  border: 4px solid transparent;
  border-top: 5px solid #555a63;
  border-bottom: 0;
  margin-right: 16px;
}

.status {
  width: 70px;
  height: 24px;
  border-radius: 4px;
  background: #e8eaed;
  display: flex;
  align-items: center;
  gap: 6px;
  padding-left: 6px;
  font-size: 12px;
  letter-spacing: -0.2px;
  color: #484c54;
  white-space: nowrap;
}

.status svg {
  width: 14px;
  height: 14px;
  color: #878c95;
}

.g-count {
  width: 19px;
  margin-left: 15px;
}

.g-plus {
  width: 12px;
  height: 12px;
  margin: 0 6px 0 11px;
  stroke-width: 1.7;
}

.g-add {
  font-size: 11.8px;
  letter-spacing: -0.25px;
}

.table {
  width: 1014px;
  margin-left: 48px;
  margin-top: 5px;
}

.row {
  height: 35px;
  border-bottom: 1px solid #eceef0;
  display: grid;
  grid-template-columns: 358px 100px 100px 100px 132px 113px 1fr;
  padding-left: 4px;
  align-items: center;
}

.row > svg {
  width: 14px;
  height: 14px;
  margin-left: 1px;
  color: #767b84;
}

.row .dots,
.row.head svg {
  margin-left: 0;
  color: #4b5059;
}

.row.head {
  height: 32px;
  font-size: 11.5px;
  color: #70757e;
}

.name {
  display: flex;
  align-items: center;
  gap: 12px;
  padding-left: 24px;
  font-weight: 600;
  letter-spacing: -0.25px;
}

.name svg {
  color: #878c95;
}

/* getting started popup */
.started {
  position: absolute;
  left: 16px;
  top: 281px;
  width: 320px;
  height: 279px;
  border-radius: 4px;
  background: #fff;
  box-shadow: 0 3px 9px rgba(0, 0, 0, 0.24);
}

.st-top {
  height: 103px;
  padding: 16px 16px 0;
  border-bottom: 1px solid #e4e6ea;
}

.st-title {
  height: 31px;
  display: flex;
  align-items: center;
  justify-content: space-between;
}

.st-title h2 {
  margin: 0;
  font-size: 18.8px;
  font-weight: 600;
  letter-spacing: -0.15px;
  color: #2f3238;
}

.st-title svg {
  width: 22px;
  height: 22px;
  margin-right: -2px;
  stroke-width: 1.2;
  color: #484c54;
}

.st-top p {
  margin: 7px 0;
  font-size: 11.4px;
  font-weight: 600;
  letter-spacing: -0.05px;
  line-height: 17px;
}

.bar {
  height: 4px;
  border-radius: 2px;
  background: #e9e9eb;
}

.bar-fill {
  height: 4px;
  border-radius: 2px;
  background: #6a55e2;
}

.started ul {
  list-style: none;
  margin: 0;
  padding: 8px 16px;
}

.started li {
  height: 32px;
  display: flex;
  align-items: center;
  gap: 12px;
}

.started li.done {
  color: #1a8558;
}

.rocket {
  position: absolute;
  left: 16px;
  top: 570px;
  width: 68px;
  height: 32px;
  border-radius: 9px;
  background: #7f76ef;
  box-shadow: 0 2px 6px rgba(110, 95, 240, 0.45);
  color: #fff;
  display: flex;
  align-items: center;
  gap: 8px;
  padding-left: 8px;
}

.rocket svg {
  stroke-width: 1;
}

.rocket span {
  width: 28px;
  height: 15px;
  border-radius: 8px;
  background: #fff;
  color: #6256c9;
  font-size: 9.5px;
  line-height: 15px;
  text-align: center;
}

.ghost {
  position: absolute;
  left: 521px;
  top: 515px;
  width: 170px;
  height: 22px;
  background: #fdfdfd;
}

.ai-chips {
  position: absolute;
  right: 10px;
  top: 458px;
  display: flex;
  flex-direction: column;
  align-items: flex-end;
  gap: 6px;
}

.ai-chip {
  height: 31px;
  border: 1px solid #e4e6ea;
  border-radius: 16px;
  background: #fff;
  display: flex;
  align-items: center;
  gap: 5px;
  padding-left: 10px;
  font-size: 12.5px;
  white-space: nowrap;
}

.ai-chip svg {
  width: 13px;
  height: 13px;
  color: #6452c5;
}

.a1 { width: 128px; }
.a2 { width: 130px; }
.a3 { width: 165px; }

.ai-fab {
  position: absolute;
  right: 10px;
  top: 567px;
  width: 40px;
  height: 40px;
  border-radius: 50%;
  background: linear-gradient(70deg, #9a50f0, #fb2fa8 80%);
  box-shadow: 0 1px 10px rgba(240, 60, 170, 0.28);
  color: #fff;
  display: flex;
  align-items: center;
  justify-content: center;
}

/* os taskbar */
.taskbar {
  height: 8px;
  flex: none;
  background: linear-gradient(90deg, #bb8580, #c3938a 50%, #c89c8c);
  border-top: 1px solid #a68a86;
}

.taskbar svg {
  width: 1366px;
  height: 8px;
  stroke: none;
}
```
